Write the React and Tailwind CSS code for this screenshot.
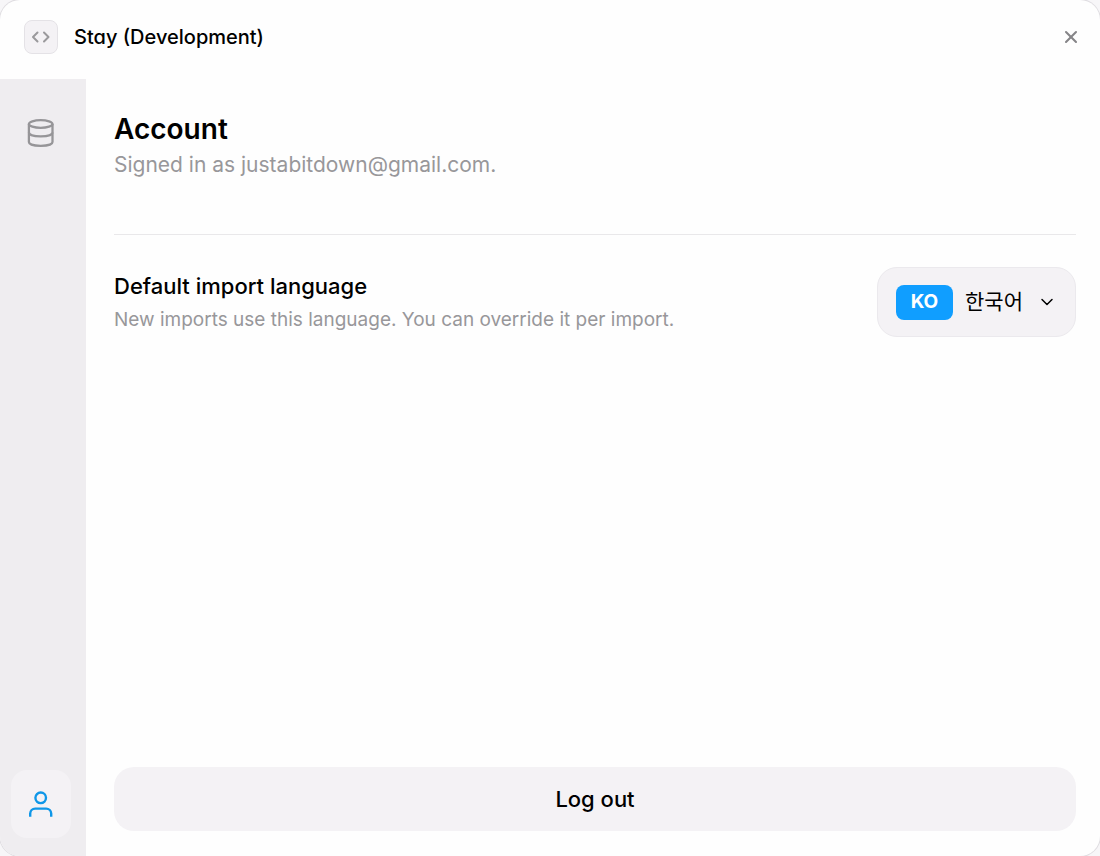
import React, { useState } from 'react';
import { ChevronDown, X } from 'lucide-react';

const languages = [{ code: 'KO', name: '한국어' }];

const CodeIcon = () => (
  <svg viewBox="0 0 20 20" className="w-5 h-5" fill="none" stroke="currentColor" strokeWidth="2" strokeLinecap="round" strokeLinejoin="round">
    <path d="M6.500 5.500 2 10 6.500 14.500M13 5.500 17.500 10 13 14.500" />
  </svg>
);

const DatabaseIcon = () => (
  <svg viewBox="0 0 28 28" className="w-7 h-7" fill="none" stroke="currentColor" strokeWidth="2.300">
    <ellipse cx="13.700" cy="5" rx="11.800" ry="3.800" />
    <path d="M1.900 5v18c0 2 3.500 3.800 11.800 3.800s11.800-1.800 11.800-3.800V5" />
    <path d="M1.900 13.500c0 2.200 4.500 3.800 11.800 3.800s11.800-1.600 11.800-3.800" />
  </svg>
);

const UserIcon = () => (
  <svg viewBox="0 0 28 28" className="w-7 h-7" fill="none" stroke="currentColor" strokeWidth="2.400">
    <circle cx="13.700" cy="7.800" r="5.300" />
    <path d="M3.200 26.800v-3.200a5 5 0 0 1 5-5h11a5 5 0 0 1 5 5v3.200" />
  </svg>
);

const Header = () => (
  <header className="flex items-center justify-between h-[79px] pl-6 pr-[19px] pb-1.5">
    <div className="flex items-center gap-4">
      <div className="w-[34px] h-[34px] flex items-center justify-center rounded-lg border border-[#e4e2e6] bg-[#f4f2f5] text-[#9a999c]">
        <CodeIcon />
      </div>
      <h1 className="text-xl font-medium [font-feature-settings:'cv11']">Stay (Development)</h1>
    </div>
    <button aria-label="Close" className="text-[#868588]">
      <X className="w-5 h-5" strokeWidth={2.5} />
    </button>
  </header>
);

const Sidebar = () => (
  <nav className="w-[86px] shrink-0 flex flex-col justify-between pl-[11px] pt-5 pb-[18px] bg-[#efedf0]">
    <button aria-label="Data" className="w-[60px] h-[68px] flex items-center justify-center text-[#969598]">
      <DatabaseIcon />
    </button>
    <button aria-label="Account" className="w-[60px] h-[68px] flex items-center justify-center rounded-2xl bg-[#f4f2f5] text-[#0f97e8]">
      <UserIcon />
    </button>
  </nav>
);

const LanguageSelect = () => {
  const [language, setLanguage] = useState('KO');

  return (
    <div className="relative flex items-center h-[70px] pl-[18px] rounded-[20px] border border-[#ebe9ed] bg-[#f4f2f5]">
      <span className="w-[57px] h-[35px] flex items-center justify-center rounded-lg bg-[#109eff] text-white text-[19px] font-bold">
        {language}
      </span>
      <select
        id="language"
        value={language}
        onChange={(e) => setLanguage(e.target.value)}
        className="w-[122px] h-full pl-3 appearance-none bg-transparent text-[21px]"
      >
        {languages.map(({ code, name }) => (
          <option key={code} value={code}>{name}</option>
        ))}
      </select>
      <ChevronDown className="absolute right-[18px] w-5 h-5 pointer-events-none" strokeWidth={1.8} />
    </div>
  );
};

const App = () => (
  <div className="bg-[#f7f6f8] font-['Inter','Noto_Sans_CJK_KR',sans-serif] text-black">
    <div className="min-h-screen flex flex-col overflow-hidden rounded-[20px] ring-1 ring-[#dfdde1] bg-[#fefefe]">
      <Header />
      <div className="flex-1 flex">
        <Sidebar />
        <main className="flex-1 flex flex-col pl-7 pr-6 pt-8 pb-[25px]">
          <section className="pb-[55px] border-b border-[#e9e8ea]">
            <h2 className="text-[28px] leading-9 font-semibold">Account</h2>
            <p className="mt-1 text-[21px] leading-7 text-[#98979a]">Signed in as justabitdown@gmail.com.</p>
          </section>

          <section className="flex items-center justify-between pt-8">
            <div>
              <label htmlFor="language" className="block text-[22px] leading-8 font-medium">Default import language</label>
              <p className="mt-1 text-[19px] leading-7 text-[#98979a]">New imports use this language. You can override it per import.</p>
            </div>
            <LanguageSelect />
          </section>

          <button className="mt-auto h-[64px] rounded-[20px] bg-[#f4f2f5] text-[22px] font-medium">Log out</button>
        </main>
      </div>
    </div>
  </div>
);

export default App;
